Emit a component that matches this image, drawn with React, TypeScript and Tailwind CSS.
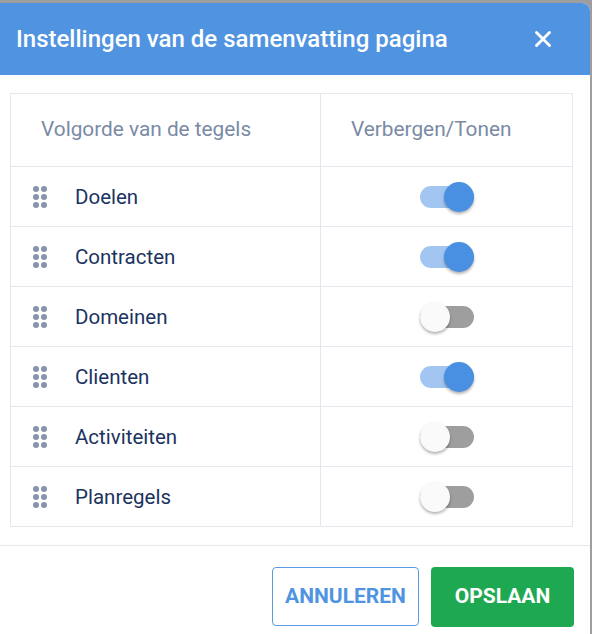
import { X } from "lucide-react";

const tiles = [
  { name: "Doelen", on: true },
  { name: "Contracten", on: true },
  { name: "Domeinen", on: false },
  { name: "Clienten", on: true },
  { name: "Activiteiten", on: false },
  { name: "Planregels", on: false },
];

function DragHandle() {
  return (
    <div className="grid grid-cols-2 gap-[2px] w-[14px]">
      {[0, 1, 2, 3, 4, 5].map((i) => (
        <span key={i} className="w-[6px] h-[6px] rounded-full bg-[#8593ad]" />
      ))}
    </div>
  );
}

function Toggle({ on }: { on: boolean }) {
  return (
    <div className="relative w-[54px] h-[30px] flex items-center">
      <div className={`w-[54px] h-[22px] rounded-full ${on ? "bg-[#a2c6f1]" : "bg-[#9e9e9e]"}`} />
      <div
        className={`absolute top-0 w-[30px] h-[30px] rounded-full shadow-[0_2px_3px_rgba(0,0,0,0.3)] ${
          on ? "right-0 bg-[#4a90e2]" : "left-0 bg-[#fafafa]"
        }`}
      />
    </div>
  );
}

export default function App() {
  return (
    <div className="w-[592px] h-[634px] bg-[#9e9e9e] pt-[3px] pr-[2px] font-['Roboto',sans-serif]">
      <div className="h-[631px] bg-white rounded-tr-lg flex flex-col">
        <div className="h-[72px] bg-[#5094e1] rounded-tr-lg flex items-center justify-between pl-[16px] pr-[34px]">
          <h1 className="text-white text-[24px] font-medium">Instellingen van de samenvatting pagina</h1>
          <X className="text-white w-[26px] h-[26px]" strokeWidth={2.6} />
        </div>
        <div className="pl-[10px] pr-[17px] pt-[18px]">
          <div className="border border-[#e6e6ee]">
            <div className="flex h-[73px] border-b border-[#e6e6ee] text-[20.8px] text-[#7a8aa5]">
              <div className="w-[310px] border-r border-[#e6e6ee] flex items-center pl-[30px]">
                Volgorde van de tegels
              </div>
              <div className="flex-1 flex items-center pl-[30px]">Verbergen/Tonen</div>
            </div>
            {tiles.map((t, i) => (
              <div
                key={t.name}
                className={`flex ${i < tiles.length - 1 ? "h-[60px] border-b border-[#e6e6ee]" : "h-[59px]"}`}
              >
                <div className="w-[310px] border-r border-[#e6e6ee] flex items-center pl-[22px]">
                  <DragHandle />
                  <span className="ml-[28px] text-[20.5px] text-[#1b3360] pt-[2px]">{t.name}</span>
                </div>
                <div className="flex-1 flex items-center justify-center">
                  <Toggle on={t.on} />
                </div>
              </div>
            ))}
          </div>
        </div>
        <div className="mt-[18px] border-t border-[#e8e8e8] flex justify-end gap-[12px] pt-[21px] pr-[16px]">
          <button className="w-[147px] h-[59px] rounded-[4px] border border-[#5a9be3] text-[#5094e1] text-[21px] font-bold">
            ANNULEREN
          </button>
          <button className="w-[143px] h-[60px] rounded-[4px] bg-[#1ea852] text-white text-[21px] font-bold">
            OPSLAAN
          </button>
        </div>
      </div>
    </div>
  );
}
